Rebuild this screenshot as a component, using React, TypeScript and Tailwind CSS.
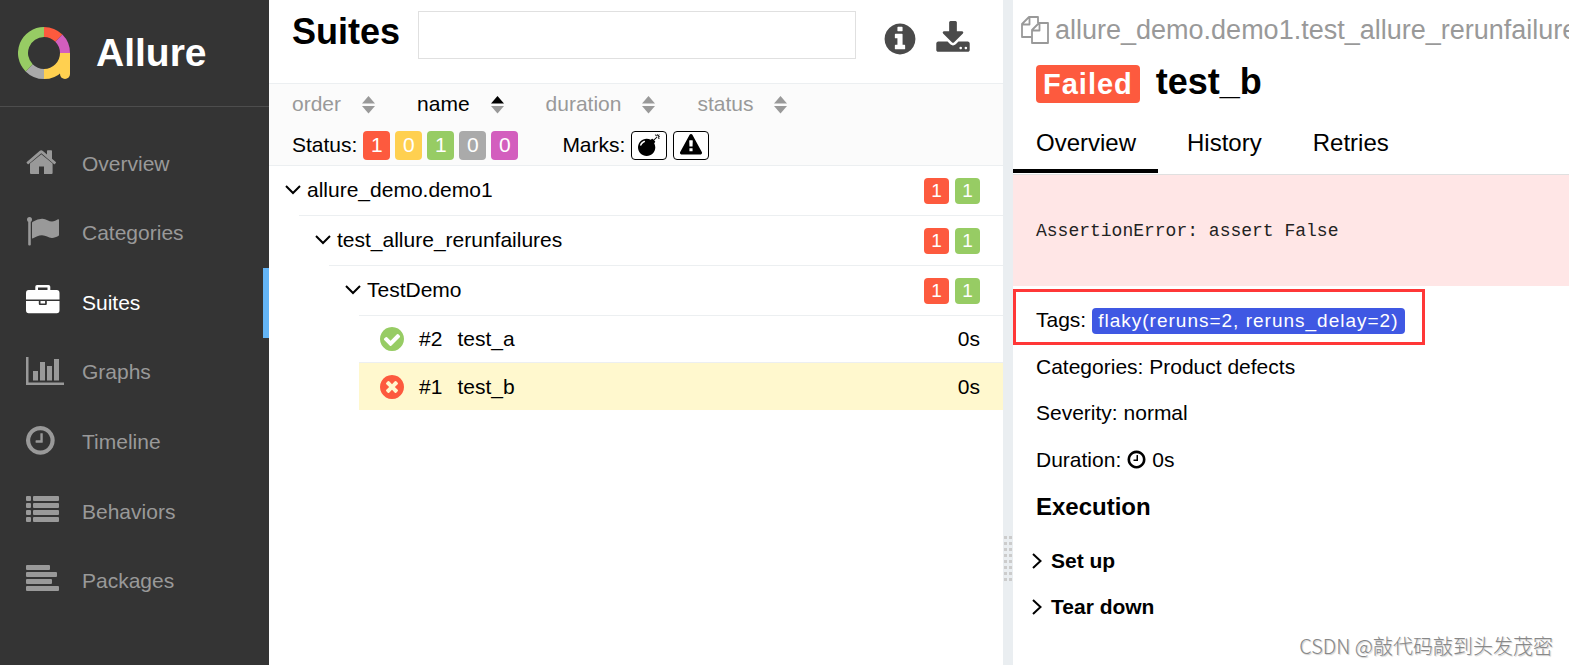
import { ReactNode } from "react";
import clsx from "clsx";

const DISC =
  "M1664 896q0 209-103 385.5t-279.5 279.5-385.5 103-385.5-103-279.5-279.5-103-385.5 103-385.5 279.5-279.5 385.5-103 385.5 103 279.5 279.5 103 385.5z";

const PATHS = {
  info:
    "M1152 1376v-160q0-14-9-23t-23-9h-96v-512q0-14-9-23t-23-9h-320q-14 0-23 9t-9 23v160q0 14 9 23t23 9h96v320h-96q-14 0-23 9t-9 23v160q0 14 9 23t23 9h448q14 0 23-9t9-23zm-128-896v-160q0-14-9-23t-23-9h-192q-14 0-23 9t-9 23v160q0 14 9 23t23 9h192q14 0 23-9t9-23z" +
    DISC,
  check:
    "M1412 734q0-28-18-46l-91-90q-19-19-45-19t-45 19l-408 407-226-226q-19-19-45-19t-45 19l-91 90q-18 18-18 46 0 27 18 45l362 362q19 19 45 19 27 0 46-19l543-543q18-18 18-45z" +
    DISC,
  times:
    "M1277 1122q0-26-19-45l-181-181 181-181q19-19 19-45 0-27-19-46l-90-90q-19-19-46-19-26 0-45 19l-181 181-181-181q-19-19-45-19-27 0-46 19l-90 90q-19 19-19 46 0 26 19 45l181 181-181 181q-19 19-19 45 0 27 19 46l90 90q19 19 46 19 26 0 45-19l181-181 181 181q19 19 45 19 27 0 46-19l90-90q19-19 19-46z" +
    DISC,
  clock:
    "M1024 544v448q0 14-9 23t-23 9h-320q-14 0-23-9t-9-23v-64q0-14 9-23t23-9h224v-352q0-14 9-23t23-9h64q14 0 23 9t9 23zm416 352q0-148-73-273t-198-198-273-73-273 73-198 198-73 273 73 273 198 198 273 73 273-73 198-198 73-273zm224 0q0 209-103 385.5t-279.5 279.5-385.5 103-385.5-103-279.5-279.5-103-385.5 103-385.5 279.5-279.5 385.5-103 385.5 103 279.5 279.5 103 385.5z",
  download:
    "M1344 1344q0-26-19-45t-45-19-45 19-19 45 19 45 45 19 45-19 19-45zm256 0q0-26-19-45t-45-19-45 19-19 45 19 45 45 19 45-19 19-45zm128-224v320q0 40-28 68t-68 28h-1472q-40 0-68-28t-28-68v-320q0-40 28-68t68-28h465l135 136q58 56 136 56t136-56l136-136h464q40 0 68 28t28 68zm-325-569q17 41-14 70l-448 448q-18 19-45 19t-45-19l-448-448q-31-29-14-70 17-39 59-39h256v-448q0-26 19-45t45-19h256q26 0 45 19t19 45v448h256q42 0 59 39z",
  warning:
    "M1024 1375v-190q0-14-9.5-23.5t-22.5-9.5h-192q-13 0-22.5 9.5t-9.5 23.5v190q0 14 9.5 23.5t22.5 9.5h192q13 0 22.5-9.5t9.5-23.5zm-2-374l18-459q0-12-10-19-13-11-24-11h-220q-11 0-24 11-10 7-10 21l17 457q0 10 10 16.5t24 6.5h185q14 0 23.5-6.5t10.5-16.5zm-14-934l768 1408q35 63-2 126-17 29-46.5 46t-63.5 17h-1536q-34 0-63.5-17t-46.5-46q-37-63-2-126l768-1408q17-31 47-49t65-18 65 18 47 49z",
  bomb:
    "M571 589q-10-25-34-35t-49 0q-108 44-191 127t-127 191q-10 25 0 49t35 34q13 5 24 5 42 0 60-40 34-84 98.5-148.5t148.5-98.5q25-11 35-35t0-49zm942-356l46 46-244 243 68 68q19 19 19 45.5t-19 45.5l-64 64q89 161 89 343 0 143-55.5 273.5t-150 225-225 150-273.5 55.5-273.5-55.5-225-150-150-225-55.5-273.5 55.5-273.5 150-225 225-150 273.5-55.5q182 0 343 89l64-64q19-19 45.5-19t45.5 19l68 68zm8-56q-10 10-22 10-13 0-23-10l-91-90q-9-10-9-23t9-23q10-9 23-9t23 9l90 91q10 9 10 22.5t-10 22.5zm230 230q-11 9-23 9t-23-9l-90-91q-10-9-10-22.5t10-22.5q9-10 22.5-10t22.5 10l91 90q9 10 9 23t-9 23zm41-183q0 14-9 23t-23 9h-96q-14 0-23-9t-9-23 9-23 23-9h96q14 0 23 9t9 23zm-192-192v96q0 14-9 23t-23 9-23-9-9-23v-96q0-14 9-23t23-9 23 9 9 23zm151 55l-91 90q-10 10-22 10-13 0-23-10-10-9-10-22.5t10-22.5l90-91q10-9 23-9t23 9q9 10 9 23t-9 23z",
};

function Icon({ name, className }: { name: keyof typeof PATHS; className?: string }) {
  return (
    <svg viewBox="0 0 1792 1792" fill="currentColor" fillRule="evenodd" className={clsx("shrink-0", className)}>
      <path d={PATHS[name]} />
    </svg>
  );
}

function Logo() {
  return (
    <svg viewBox="0 0 52 52" fill="none" strokeWidth="10" className="size-[52px]">
      <path d="M26 5A21 21 0 0 1 40.85 11.15" stroke="#fd5a3e" />
      <path d="M40.85 11.15A21 21 0 0 1 47 26" stroke="#d35ebe" />
      <path d="M26 47A21 21 0 0 1 11.15 40.85" stroke="#aaa" />
      <path d="M11.15 40.85A21 21 0 0 1 26 5" stroke="#97cc64" />
      <path d="M47 26A21 21 0 0 1 26 47" stroke="#ffd050" />
      <path d="M42 26h10v21a5 5 0 0 1-10 0z" fill="#ffd050" />
    </svg>
  );
}

const NAV: { label: string; active?: boolean; icon: ReactNode }[] = [
  {
    label: "Overview",
    icon: (
      <>
        <path d="M4 17.5 15.3 8.2 26.6 17.5V27a1 1 0 0 1-1 1H18v-7.5h-5V28H5a1 1 0 0 1-1-1z" />
        <path d="M.8 16 13.5 5q1.7-1.4 3.4 0L21 8.6V5q0-.7.7-.7H25.3q.7 0 .7.7V12.800L29.8 16q.5.5 0 1l-.9 1q-.5.5-1 .1L15.3 7.2 2.7 18.1q-.5.4-1-.1L.7 17q-.4-.5.1-1z" />
      </>
    ),
  },
  {
    label: "Categories",
    icon: (
      <>
        <circle cx="3.5" cy="4.5" r="2.5" />
        <rect x="2.2" y="4" width="2.6" height="26.5" rx="1" />
        <path d="M6 8q0-.8.8-1.200Q12 3.5 16.5 3.7c3.5.2 6.5 2.8 9.500 2.8 2 0 4.3-1.4 6-2.2q1-.4 1 .7V20q0 .7-.7 1.1c-2 1.1-4.3 2-6.5 1.9-3.3-.1-6-2.7-9.8-2.700-3.3 0-6.3 1.5-8.900 3Q6 24 6 22.600z" />
      </>
    ),
  },
  {
    label: "Suites",
    active: true,
    icon: (
      <>
        <path
          fillRule="evenodd"
          d="M11 0h11.500q1.800 0 1.800 1.800V5h6.500Q33.500 5 33.500 8v6.500H0V8Q0 5 2.700 5H9.300V1.800Q9.300 0 11 0zm1 2.500V5h9.500V2.500z"
        />
        <path d="M0 16h12.800v3q0 1 1 1h6q1 0 1-1v-3h12.700v9.300q0 2.900-2.700 2.900H2.700Q0 28.200 0 25.300z" />
        <rect x="14.500" y="16" width="4.600" height="2.500" />
      </>
    ),
  },
  {
    label: "Graphs",
    icon: (
      <path d="M0 3h2.500v25.500H38V31H0zM7 17h5v9.500H7zM14 8h5v18.500h-5zM21 12h5v14.500h-5zM28 5h5v21.500h-5z" />
    ),
  },
  {
    label: "Timeline",
    icon: <path transform="translate(-2.4 -.4) scale(.0187)" d={PATHS.clock} />,
  },
  {
    label: "Behaviors",
    icon: [2, 9, 16, 23].map((y) => (
      <g key={y}>
        <rect y={y} width="5" height="5" rx="1" />
        <rect x="7" y={y} width="26" height="5" rx="1" />
      </g>
    )),
  },
  {
    label: "Packages",
    icon: [24, 31, 26, 33].map((w, i) => <rect key={w} y={2 + i * 7} width={w} height="5" rx="1" />),
  },
];

function Sidebar() {
  return (
    <aside className="w-[269px] shrink-0 bg-[#343434] text-[#999]">
      <div className="flex h-[107px] items-center gap-[26px] border-b border-[#4d4d4d] pl-[18px]">
        <Logo />
        <span className="text-[39px] font-bold text-white">Allure</span>
      </div>
      <nav className="mt-[22px] grid h-[487px] grid-rows-7">
        {NAV.map((item) => (
          <a
            key={item.label}
            href="#"
            className={clsx(
              "flex items-center gap-[18px] border-r-[6px] pl-[26px]",
              item.active ? "border-[#64b5f6] text-white" : "border-transparent"
            )}
          >
            <svg viewBox="0 0 38 36" fill="currentColor" fillRule="evenodd" className="h-9 w-[38px]">
              {item.icon}
            </svg>
            {item.label}
          </a>
        ))}
      </nav>
    </aside>
  );
}

const SORTS = ["order", "name", "duration", "status"];

function Sorter({ label }: { label: string }) {
  const active = label === "name";
  return (
    <button className={clsx("flex items-center gap-[21px]", active ? "text-black" : "text-[#999]")}>
      {label}
      <svg viewBox="0 0 13 18" className="mt-[2px] h-[18px] w-[13px]">
        <path d="M6.500 0 13 7.500H0z" fill={active ? "#000" : "#999"} />
        <path d="M0 10h13L6.500 17.500z" fill="#999" />
      </svg>
    </button>
  );
}

const STATUSES = [
  { count: 1, color: "bg-[#fd5a3e]" },
  { count: 0, color: "bg-[#ffd050]" },
  { count: 1, color: "bg-[#97cc64]" },
  { count: 0, color: "bg-[#aaa]" },
  { count: 0, color: "bg-[#d35ebe]" },
];

function Chevron({ right }: { right?: boolean }) {
  return right ? (
    <svg viewBox="0 0 10 16" fill="none" stroke="currentColor" strokeWidth="2" className="h-4 w-[10px]">
      <path d="M1 1 8.500 8 1 15" />
    </svg>
  ) : (
    <svg viewBox="0 0 16 10" fill="none" stroke="currentColor" strokeWidth="2" className="h-[10px] w-4">
      <path d="M1 1 8 8 15 1" />
    </svg>
  );
}

function Group({ name, children }: { name: string; children: ReactNode }) {
  return (
    <div>
      <div className="flex h-[49px] items-center pr-[23px] pl-4">
        <button className="flex items-center gap-[6px] pb-[2px]">
          <Chevron />
          {name}
        </button>
        <span className="ml-auto flex gap-[6px] text-[19px] leading-[26px] text-white">
          <span className="w-[25px] rounded bg-[#fd5a3e] text-center">1</span>
          <span className="w-[25px] rounded bg-[#97cc64] text-center">1</span>
        </span>
      </div>
      <div className="ml-[30px] border-t border-[#eceff1]">{children}</div>
    </div>
  );
}

function TestRow({ order, name, passed }: { order: number; name: string; passed?: boolean }) {
  return (
    <a
      href="#"
      className={clsx(
        "flex h-[47px] items-center pr-[23px] pl-[19px]",
        passed ? "border-b border-[#eceff1]" : "bg-[#fff8ce]"
      )}
    >
      <Icon
        name={passed ? "check" : "times"}
        className={clsx("size-7", passed ? "text-[#97cc64]" : "text-[#fd5a3e]")}
      />
      <span className="ml-[13px]">#{order}</span>
      <span className="ml-[15px]">{name}</span>
      <span className="ml-auto">0s</span>
    </a>
  );
}

function SuitesPanel() {
  return (
    <main className="min-w-0 flex-1">
      <header className="flex h-[83px] items-start pt-[11px] pr-8 pl-[23px]">
        <h1 className="text-[36px] leading-[42px] font-bold">Suites</h1>
        <input
          type="text"
          aria-label="Search"
          className="ml-[18px] h-12 min-w-0 flex-1 border border-[#e0e0e0] px-3 outline-none"
        />
        <button aria-label="Info" className="mt-[10px] ml-[26px] text-[#4a4a4a]">
          <Icon name="info" className="size-9" />
        </button>
        <button aria-label="Download" className="mt-[10px] ml-[17px] text-[#4a4a4a]">
          <Icon name="download" className="size-9" />
        </button>
      </header>

      <div className="border-y border-[#eceff1] bg-[#fbfbfb] pl-[23px]">
        <div className="flex h-[39px] items-center gap-[42px]">
          {SORTS.map((label) => (
            <Sorter key={label} label={label} />
          ))}
        </div>
        <div className="flex h-[42px] items-center pt-[2px]">
          <span className="mr-[6px]">Status:</span>
          <div className="flex gap-[5px]">
            {STATUSES.map((s, i) => (
              <button key={i} className={clsx("h-[29px] w-[27px] rounded text-white", s.color)}>
                {s.count}
              </button>
            ))}
          </div>
          <span className="mr-[6px] ml-11">Marks:</span>
          <div className="flex gap-[6px]">
            <button
              aria-label="Flaky"
              className="flex h-[29px] w-9 items-center justify-center rounded border border-black bg-white"
            >
              <Icon name="bomb" className="size-[22px]" />
            </button>
            <button
              aria-label="Warning"
              className="flex h-[29px] w-9 items-center justify-center rounded border border-black bg-white"
            >
              <Icon name="warning" className="size-[22px]" />
            </button>
          </div>
        </div>
      </div>

      <Group name="allure_demo.demo1">
        <Group name="test_allure_rerunfailures">
          <Group name="TestDemo">
            <TestRow order={2} name="test_a" passed />
            <TestRow order={1} name="test_b" />
          </Group>
        </Group>
      </Group>
    </main>
  );
}

function Gutter() {
  return (
    <div className="w-[10px] shrink-0 bg-[#eaeef1] pt-[536px]">
      <div className="grid grid-cols-[3px_3px] justify-center gap-x-[2px] gap-y-[3px]">
        {Array.from({ length: 16 }, (_, i) => (
          <span key={i} className="h-[3px] bg-[#ccc]" />
        ))}
      </div>
    </div>
  );
}

function DetailsPanel() {
  return (
    <section className="w-[556px] shrink-0 overflow-hidden">
      <div className="flex h-[60px] items-center gap-[6px] pl-2 text-[27px] whitespace-nowrap text-[#999]">
        <svg
          viewBox="0 0 28 28"
          fill="none"
          stroke="currentColor"
          strokeWidth="1.800"
          strokeLinejoin="round"
          className="size-7 shrink-0"
        >
          <path d="M10.500 21H1V8L8 1h9v6M1 8.500h7.500V1" />
          <path d="M11 14l7-7h9v20H11zM11 14.500h7.500V7" />
        </svg>
        allure_demo.demo1.test_allure_rerunfailures
      </div>

      <div className="flex h-[52px] items-start pt-1 pl-[23px]">
        <span className="mt-[1px] rounded bg-[#fd5a3e] px-[7px] text-[29px] leading-[38px] font-bold tracking-[1px] text-white">
          Failed
        </span>
        <h2 className="ml-4 text-[36px] leading-[36px] font-bold">test_b</h2>
      </div>

      <nav className="flex h-[63px] gap-[6px] border-b border-[#e0e0e0] text-2xl">
        {["Overview", "History", "Retries"].map((tab) => (
          <a
            key={tab}
            href="#"
            className={clsx(
              "h-[61px] border-b-4 pt-[15px] pr-[22px] pl-[23px]",
              tab === "Overview" ? "border-black" : "border-transparent"
            )}
          >
            {tab}
          </a>
        ))}
      </nav>

      <pre className="flex h-[111px] items-center bg-[#ffe6e6] pl-[23px] font-['Liberation_Mono',monospace] text-[18px] text-[#222]">
        AssertionError: assert False
      </pre>

      <div className="mt-[3px] flex h-14 w-fit items-center gap-[6px] border-[3px] border-[#ff3737] pt-2 pr-[17px] pl-5">
        <span className="pb-[2px]">Tags:</span>
        <span className="rounded bg-[#3f58e3] px-[6px] text-[19px] leading-[26px] tracking-[1px] text-white">
          flaky(reruns=2, reruns_delay=2)
        </span>
      </div>
      <div className="flex h-11 items-center pl-[23px]">Categories: Product defects</div>
      <div className="flex h-[47px] items-center pl-[23px]">Severity: normal</div>
      <div className="flex h-[47px] items-center gap-[5px] pl-[23px]">
        Duration:
        <Icon name="clock" className="size-[21px]" />
        0s
      </div>
      <h3 className="flex h-[47px] items-center pl-[23px] text-2xl font-bold">Execution</h3>
      <div className="mt-2 pl-[19px]">
        {["Set up", "Tear down"].map((stage) => (
          <button key={stage} className="flex h-[46px] items-center gap-[9px] font-bold">
            <Chevron right />
            {stage}
          </button>
        ))}
      </div>
    </section>
  );
}

export default function App() {
  return (
    <div className="relative flex min-h-screen overflow-hidden bg-white font-['Liberation_Sans',Arial,sans-serif] text-[21px] leading-7 text-black">
      <Sidebar />
      <SuitesPanel />
      <Gutter />
      <DetailsPanel />
      <span className="absolute right-4 bottom-[5px] font-['Noto_Sans_CJK_SC',sans-serif] text-[20px] font-light text-[#888] [text-shadow:1px_1px_1px_#ccc]">
        CSDN @敲代码敲到头发茂密
      </span>
    </div>
  );
}
